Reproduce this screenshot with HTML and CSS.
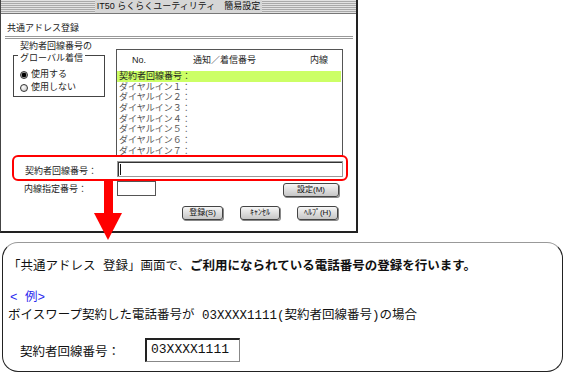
FILE: index.html
```html
<!DOCTYPE html>
<html lang="ja">
<head>
    <meta charset="UTF-8">
    <title>共通アドレス登録</title>
    <link rel="stylesheet" href="styles.css">
</head>
<body>
<div class="page">
    <div class="window">
        <div class="titlebar"><span class="title">IT50 らくらくユーティリティ　簡易設定</span></div>
        <div class="heading">共通アドレス登録</div>
        <div class="rule"></div>

        <div class="panel">
            <div class="global">
                <div class="global-label">契約者回線番号の</div>
                <div class="group">
                    <div class="legend">グローバル着信</div>
                    <div class="radio first"><span class="dot checked"></span>使用する</div>
                    <div class="radio"><span class="dot"></span>使用しない</div>
                </div>
            </div>
            <div class="list">
                <div class="list-head"><span>No.</span><span>通知／着信番号</span><span>内線</span></div>
                <div class="list-row selected">契約者回線番号：</div>
                <div class="list-row">ダイヤルイン１：</div>
                <div class="list-row">ダイヤルイン２：</div>
                <div class="list-row">ダイヤルイン３：</div>
                <div class="list-row">ダイヤルイン４：</div>
                <div class="list-row">ダイヤルイン５：</div>
                <div class="list-row">ダイヤルイン６：</div>
                <div class="list-row">ダイヤルイン７：</div>
            </div>
        </div>

        <div class="highlight">
            <span class="field-label">契約者回線番号：</span>
            <span class="input wide"><span class="caret"></span></span>
        </div>

        <div class="ext-row">
            <span class="field-label">内線指定番号：</span>
            <span class="input small"></span>
            <span class="btn set">設定(M)</span>
        </div>

        <div class="buttons">
            <span class="btn">登録(S)</span>
            <span class="btn cancel">ｷｬﾝｾﾙ</span>
            <span class="btn">ﾍﾙﾌﾟ(H)</span>
        </div>
    </div>

    <!-- 下向き矢印 -->
    <svg class="arrow" width="28" height="60" viewBox="0 0 28 60">
        <rect x="10" y="0" width="9" height="33" fill="#ff0000"/>
        <polygon points="0,32 28,32 14,59" fill="#ff0000"/>
    </svg>

    <div class="bubble">
        <p>「共通アドレス 登録」画面で、<b>ご利用になられている電話番号の登録を行います。</b></p>
        <p class="example">&lt; 例&gt;</p>
        <p>ボイスワープ契約した電話番号が 03XXXX1111(契約者回線番号)の場合</p>
        <div class="sample">
            <span class="sample-label">契約者回線番号：</span>
            <span class="sample-box">03XXXX1111</span>
        </div>
    </div>
</div>
</body>
</html>
```

FILE: styles.css
```css
/* Page */
body {
    margin: 0;
    background: #fff;
    color: #222;
    font-family: "Liberation Sans", "Noto Sans CJK JP", sans-serif;
}
.page {
    position: relative;
    width: 565px;
    height: 374px;
}

/* Window */
.window {
    width: 355px;
    height: 231px;
    border-left: 1px solid #444;
    border-right: 2px solid #222;
    border-bottom: 2px solid #222;
    font-size: 9px;
}
.titlebar {
    height: 13px;
    border-bottom: 1px solid #777;
    background: repeating-linear-gradient(to bottom, #e2e2e2 0, #e2e2e2 1px, #a9a9a9 1px, #a9a9a9 2px);
    display: flex;
    justify-content: center;
}
.title {
    width: 167px;
    background: #d6d6d6;
    text-align: center;
    line-height: 13px;
    font-size: 9px;
    color: #111;
}
.heading {
    padding: 8px 0 0 6px;
    line-height: 12px;
}
.rule {
    margin: 2px 3px 0 4px;
    height: 1px;
    border-top: 1px solid #999;
    border-bottom: 1px solid #999;
}

/* Top panel */
.panel {
    display: flex;
    padding-top: 1px;
}
.global {
    margin-left: 12px;
    width: 92px;
}
.global-label {
    padding-left: 7px;
    line-height: 12px;
}
.group {
    margin-top: 3px;
    height: 42px;
    box-sizing: border-box;
    border: 1px solid #444;
}
.legend {
    display: table;
    margin: -4px 0 0 4px;
    padding: 0 2px;
    background: #fff;
    line-height: 12px;
}
.radio {
    display: flex;
    align-items: center;
    gap: 3px;
    padding-left: 6px;
    line-height: 13px;
}
.radio.first {
    margin-top: 4px;
}
.dot {
    width: 8px;
    height: 8px;
    box-sizing: border-box;
    border: 1px solid #333;
    border-radius: 50%;
    background: radial-gradient(circle at 35% 35%, #fff, #bbb);
}
.dot.checked {
    background: radial-gradient(circle, #000 0, #000 2px, #999 2.5px, #ddd 4px);
}

.list {
    margin: 9px 0 0 11px;
    width: 227px;
    height: 108px;
    box-sizing: border-box;
    border: 1px solid #555;
    overflow: hidden;
}
.list-head {
    display: grid;
    grid-template-columns: 61px 117px 1fr;
    padding-left: 15px;
    height: 21px;
    line-height: 21px;
}
.list-row {
    height: 10.7px;
    line-height: 10.7px;
    margin-right: 1px;
    padding-left: 2px;
    color: #555;
}
.list-row.selected {
    background: #ccff66;
    color: #222;
}

/* Fields */
.highlight {
    position: relative;
    margin: -2px 0 0 11px;
    width: 336px;
    height: 26px;
    box-sizing: border-box;
    border: 2px solid #ff0000;
    border-radius: 6px;
    padding: 4px 0 0 11px;
    display: flex;
    align-items: center;
}
.highlight .field-label {
    width: 92px;
}
.input {
    display: block;
    box-sizing: border-box;
    border: 1px solid #999;
    box-shadow: inset 1px 1px 0 #333;
    background: #fff;
}
.input.wide {
    width: 226px;
    height: 16px;
    align-self: flex-start;
}
.caret {
    display: block;
    width: 1px;
    height: 11px;
    margin: 2px 0 0 2px;
    background: #111;
}
.ext-row {
    display: flex;
    align-items: center;
    height: 15px;
    padding-left: 23px;
}
.ext-row .field-label {
    width: 93px;
}
.input.small {
    width: 39px;
    height: 15px;
    box-shadow: none;
    border-color: #555;
}

/* Buttons */
.buttons {
    display: flex;
    gap: 17px;
    margin: 10px 0 0 181px;
}
.btn {
    width: 41px;
    height: 14px;
    box-sizing: border-box;
    border: 1px solid #444;
    border-radius: 3px;
    background: linear-gradient(#f6f6f6, #c6c6c6);
    box-shadow: 1px 1px 0 #888;
    font-size: 8px;
    line-height: 12px;
    text-align: center;
    color: #111;
}
.btn.cancel {
    width: 40px;
}
.btn.set {
    width: 56px;
    margin-left: 127px;
    margin-top: 2px;
}

/* Arrow */
.arrow {
    position: absolute;
    left: 94px;
    top: 181px;
}

/* Explanation bubble */
.bubble {
    margin: 9px 0 0 2px;
    width: 561px;
    height: 130px;
    box-sizing: border-box;
    border: 1px solid #222;
    border-top-color: #999;
    border-radius: 16px;
    padding: 15px 0 0 5px;
    font-family: "Liberation Mono", "Noto Sans CJK JP", monospace;
    font-size: 12.5px;
    color: #111;
}
.bubble p {
    margin: 0;
    line-height: 18px;
}
.bubble .example {
    margin-top: 13px;
    padding-left: 2px;
    color: #2a2aee;
}
.sample {
    display: flex;
    align-items: center;
    margin-top: 13px;
    padding-left: 12px;
}
.sample-label {
    width: 125px;
}
.sample-box {
    width: 95px;
    height: 24px;
    box-sizing: border-box;
    border: 1px solid #888;
    border-left: 2px solid #222;
    border-top: 2px solid #222;
    padding-left: 4px;
    font-size: 13px;
    line-height: 20px;
}
```
